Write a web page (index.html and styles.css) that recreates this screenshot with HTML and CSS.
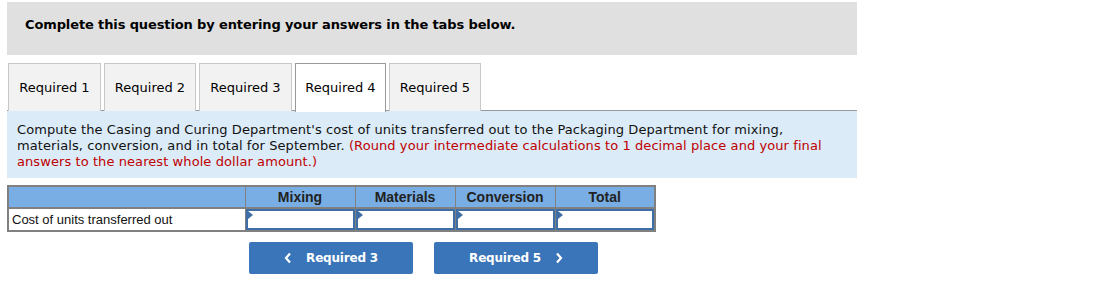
FILE: index.html
```html
<!DOCTYPE html>
<html lang="en">
  <head>
    <meta charset="UTF-8" />
    <title>Required 4</title>
    <link rel="stylesheet" href="styles.css">
  </head>
  <body>
    <div class="question">
      <div class="banner">Complete this question by entering your answers in the tabs below.</div>

      <div class="tabs">
        <div class="tab t1">Required 1</div>
        <div class="tab t2">Required 2</div>
        <div class="tab t3">Required 3</div>
        <div class="tab t4 active">Required 4</div>
        <div class="tab t5">Required 5</div>
      </div>

      <div class="prompt">
        Compute the Casing and Curing Department's cost of units transferred out to the Packaging Department for mixing,<br>
        materials, conversion, and in total for September. <span class="hint">(Round your intermediate calculations to 1 decimal place and your final<br>
        answers to the nearest whole dollar amount.)</span>
      </div>

      <table class="answers">
        <tr>
          <th class="label-col"></th>
          <th class="mix">Mixing</th>
          <th>Materials</th>
          <th>Conversion</th>
          <th>Total</th>
        </tr>
        <tr>
          <td class="label">Cost of units transferred out</td>
          <td class="input"><span class="flag"></span></td>
          <td class="input"><span class="flag"></span></td>
          <td class="input"><span class="flag"></span></td>
          <td class="input"><span class="flag"></span></td>
        </tr>
      </table>

      <div class="nav">
        <button class="prev">
          <svg class="chev" width="8" height="12" viewBox="0 0 8 12"><polyline points="6,1.5 2,6 6,10.5" /></svg>
          <span>Required 3</span>
        </button>
        <button class="next">
          <span>Required 5</span>
          <svg class="chev" width="8" height="12" viewBox="0 0 8 12"><polyline points="2,1.5 6,6 2,10.5" /></svg>
        </button>
      </div>
    </div>
  </body>
</html>
```

FILE: styles.css
```css
* {
  margin: 0;
  padding: 0;
  box-sizing: border-box;
}
body {
  font-family: "DejaVu Sans", Verdana, sans-serif;
  font-size: 13px;
  color: #000;
  background: #fff;
  padding: 2px 0 0 7px;
}
.question {
  width: 850px;
}
.banner {
  background-color: #e0e0e0;
  height: 53px;
  padding: 15px 0 0 18px;
  font-weight: bold;
  font-size: 13px;
  letter-spacing: -0.12px;
}

.tabs {
  display: flex;
  column-gap: 3px;
  margin-top: 8px;
  padding-left: 1px;
  border-bottom: 1px solid #999;
  height: 48px;
}
.tab {
  width: 93px;
  height: 48px;
  background-color: #f2f2f2;
  border: 1px solid #c8c8c8;
  border-bottom: none;
  text-align: center;
  padding-top: 16px;
}
.t2 {
  width: 92px;
}
.t4 {
  width: 91px;
}
.t5 {
  width: 92px;
}
.tab.active {
  background-color: #fff;
  border-color: #999;
  margin-bottom: -1px;
  height: 49px;
}

.prompt {
  background-color: #dbebf8;
  height: 67px;
  padding: 11px 10px 0 10px;
  line-height: 16px;
  color: #111;
  letter-spacing: 0.08px;
}
.hint {
  color: #c00000;
}

.answers {
  margin-top: 7px;
  border-collapse: collapse;
  font-family: "Liberation Sans", Arial, sans-serif;
  font-size: 13px;
  border: 2px solid #808080;
}
.answers th {
  background-color: #78aee3;
  height: 22px;
  width: 100px;
  font-weight: bold;
  font-size: 14px;
  color: #222;
  border: 1px solid #808080;
  border-bottom: 2px solid #808080;
}
.answers th.label-col {
  width: 237px;
}
.answers th.mix {
  width: 110px;
}
.answers td {
  height: 23px;
  border: 1px solid #808080;
}
.answers td.label {
  padding-left: 3px;
  color: #111;
}
.answers td.input {
  position: relative;
  box-shadow: inset 0 0 0 2px #3d6ea6;
}
.flag {
  position: absolute;
  left: 2px;
  top: 2px;
  width: 0;
  height: 0;
  border-top: 4px solid transparent;
  border-bottom: 4px solid transparent;
  border-left: 5px solid #3d6ea6;
}

.nav {
  display: flex;
  column-gap: 21px;
  margin-top: 10px;
  padding-left: 242px;
}
button {
  width: 164px;
  height: 32px;
  border: none;
  border-radius: 2px;
  background-color: #3a75b9;
  color: #fff;
  font-family: "DejaVu Sans", Verdana, sans-serif;
  font-size: 12px;
  font-weight: bold;
  letter-spacing: -0.2px;
  display: flex;
  align-items: center;
  justify-content: center;
  column-gap: 14px;
}
.chev {
  fill: none;
  stroke: #fff;
  stroke-width: 2.2;
}
```
